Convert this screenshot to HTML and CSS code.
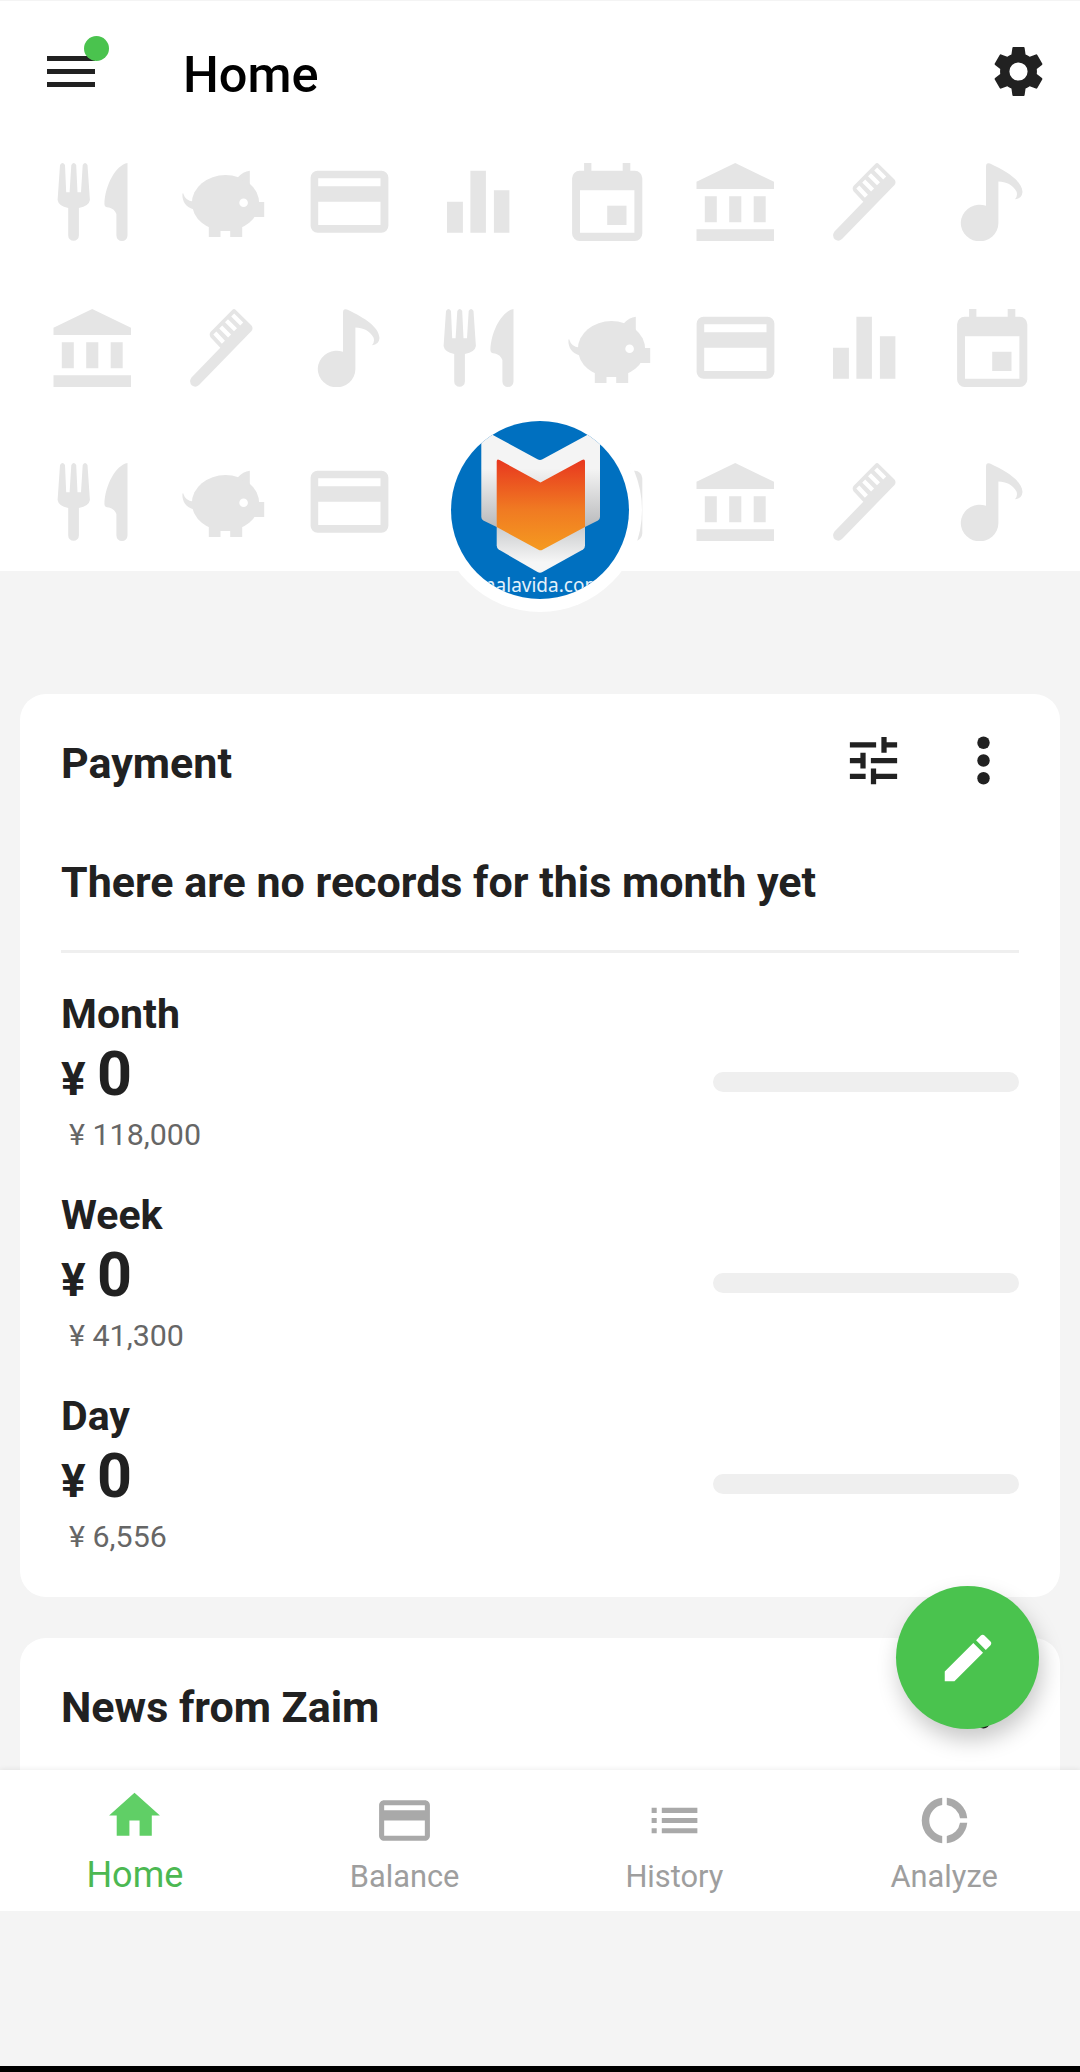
FILE: index.html
```html
<!DOCTYPE html>
<html lang="en">
<head>
    <meta charset="UTF-8">
    <meta name="viewport" content="width=device-width, initial-scale=1.0">
    <title>Home</title>
    <link rel="stylesheet" href="styles.css">
</head>
<body>
    <!-- Icons of the header pattern -->
    <svg class="sprite" xmlns="http://www.w3.org/2000/svg">
        <symbol id="food" viewBox="0 0 128.5 78">
            <path d="M29.6 37L32 2Q34.5-2 37 2L38.2 29.3H41.6L43.3 2Q45.8-2 48.2 2L49.5 29.3H53L54.7 2Q57-2 59.5 2L61.9 37Q61 43 50.9 45V72.5a5.35 5.35 0 0 1-10.7 0V45Q30.5 43 29.6 37Z"/>
            <path d="M99.5 0C88 2 77 22 76.4 41Q76.5 44.5 81 44.6Q86.5 46 88.4 51V72.5a5.55 5.5 0 0 0 11.1 0Z"/>
        </symbol>
        <symbol id="pig" viewBox="0 0 128.5 78">
            <ellipse cx="68.5" cy="40" rx="33.6" ry="28"/>
            <path d="M80.7 14.5Q86 8.5 92.8 7.7V23ZM96 39H107.2V54H96ZM51.8 60H85.2V74H73.2V68H63.5V74H51.8Z"/>
            <path d="M26 30Q28.5 38 36 38.5L37 46.5Q25 43 25.4 31Z"/>
            <circle cx="86.6" cy="39.7" r="4.3" fill="#fff"/>
        </symbol>
        <symbol id="card" viewBox="0 0 128.5 78">
            <path fill-rule="evenodd" d="M32.6 7.7H96.4a7 7 0 0 1 7 7V62.7a7 7 0 0 1-7 7H32.6a7 7 0 0 1-7-7V14.7a7 7 0 0 1 7-7ZM33.2 15.2V23.3H95.5V15.2ZM33.2 38.7V62H95.5V38.7Z"/>
        </symbol>
        <symbol id="bars" viewBox="0 0 128.5 78">
            <path d="M33 38.7H48.9V69.7H33ZM56.4 7.7H71.9V69.7H56.4ZM79.9 27.3H95.4V69.7H79.9Z"/>
        </symbol>
        <symbol id="calendar" viewBox="0 0 128.5 78">
            <path fill-rule="evenodd" d="M41.1 0H48.4V7.7H79.7V0H87.3V7.7H91.8a7.5 7.5 0 0 1 7.5 7.5V70.5a7.5 7.5 0 0 1-7.5 7.5H36.6a7.5 7.5 0 0 1-7.5-7.5V15.2a7.5 7.5 0 0 1 7.5-7.5H41.1ZM37 27.3V69.7H91.4V27.3Z"/>
            <path d="M64.2 42.7H83.5V62H64.2Z"/>
        </symbol>
        <symbol id="bank" viewBox="0 0 128.5 78">
            <path d="M64.2 0L103 18.7V26H25.5V18.7ZM33.8 33.3H45.8V59.3H33.8ZM58.2 33.3H70.3V59.3H58.2ZM82.7 33.3H94.7V59.3H82.7ZM25.5 66.3H103V78H25.5Z"/>
        </symbol>
        <symbol id="brush" viewBox="0 0 128.5 78">
            <path d="M34.5 68.5L63.3 38.8L53.5 28.3Q51.8 25.5 53.5 23L75 1.2Q77-1 79 1.2L94.5 16.5Q96.5 19 94.5 22L42 76Q38.5 79 35 76.5Q31.5 73 34.5 68.5Z"/>
            <path d="M57.8 24L66.4 33.3M63.7 18L72.6 27M69.5 11.7L78.5 20.7M75.7 6L84.7 15" stroke="#fff" stroke-width="4.2"/>
        </symbol>
        <symbol id="note" viewBox="0 0 128.5 78">
            <path d="M58 3.5Q58-1 62 .5C80 9 94 18 94.5 29Q94 35.5 87 36.3Q90 33 88.5 28.5C85 22 78 18.5 70.4 18.5V60A18.8 18.3 0 1 1 58 42.8Z"/>
        </symbol>
    </svg>

    <div class="app">
        <header class="hero">
            <div class="appbar">
                <div class="menu">
                    <span></span>
                    <span></span>
                    <span></span>
                    <i class="dot"></i>
                </div>
                <h1>Home</h1>
                <svg class="gear" viewBox="0 0 24 24"><path d="M19.43 12.98c.04-.32.07-.64.07-.98s-.03-.66-.07-.98l2.11-1.65c.19-.15.24-.42.12-.64l-2-3.46c-.12-.22-.39-.3-.61-.22l-2.49 1c-.52-.4-1.08-.73-1.69-.98l-.38-2.65C14.46 2.18 14.25 2 14 2h-4c-.25 0-.46.18-.49.42l-.38 2.65c-.61.25-1.17.59-1.69.98l-2.49-1c-.23-.09-.49 0-.61.22l-2 3.46c-.13.22-.07.49.12.64l2.11 1.65c-.04.32-.07.65-.07.98s.03.66.07.98l-2.11 1.65c-.19.15-.24.42-.12.64l2 3.46c.12.22.39.3.61.22l2.49-1c.52.4 1.08.73 1.69.98l.38 2.65c.03.24.24.42.49.42h4c.25 0 .46-.18.49-.42l.38-2.65c.61-.25 1.17-.59 1.69-.98l2.49 1c.23.09.49 0 .61-.22l2-3.46c.12-.22.07-.49-.12-.64l-2.11-1.65zM12 15.7a3.7 3.7 0 1 1 0-7.4a3.7 3.7 0 0 1 0 7.4z"/></svg>
            </div>

            <div class="pattern">
                <svg><use href="#food"/></svg>
                <svg><use href="#pig"/></svg>
                <svg><use href="#card"/></svg>
                <svg><use href="#bars"/></svg>
                <svg><use href="#calendar"/></svg>
                <svg><use href="#bank"/></svg>
                <svg><use href="#brush"/></svg>
                <svg><use href="#note"/></svg>

                <svg><use href="#bank"/></svg>
                <svg><use href="#brush"/></svg>
                <svg><use href="#note"/></svg>
                <svg><use href="#food"/></svg>
                <svg><use href="#pig"/></svg>
                <svg><use href="#card"/></svg>
                <svg><use href="#bars"/></svg>
                <svg><use href="#calendar"/></svg>

                <svg><use href="#food"/></svg>
                <svg><use href="#pig"/></svg>
                <svg><use href="#card"/></svg>
                <svg><use href="#bars"/></svg>
                <svg><use href="#calendar"/></svg>
                <svg><use href="#bank"/></svg>
                <svg><use href="#brush"/></svg>
                <svg><use href="#note"/></svg>
            </div>

            <div class="avatar">
                <svg viewBox="0 0 178 178">
                    <defs>
                        <linearGradient id="silver" x1="0" y1="0" x2="0" y2="1">
                            <stop offset=".45" stop-color="#f4f4f4"/>
                            <stop offset="1" stop-color="#b9babc"/>
                        </linearGradient>
                        <linearGradient id="silverLow" x1="0" y1="0" x2="0" y2="1">
                            <stop offset="0" stop-color="#c4c6c8"/>
                            <stop offset=".8" stop-color="#f6f6f6"/>
                        </linearGradient>
                        <linearGradient id="orange" x1="0" y1="0" x2="0" y2="1">
                            <stop offset="0" stop-color="#e8371f"/>
                            <stop offset=".55" stop-color="#f07a22"/>
                            <stop offset="1" stop-color="#f59a20"/>
                        </linearGradient>
                    </defs>
                    <rect width="178" height="178" fill="#0070c0"/>
                    <path d="M30.3 0V96Q30.3 98.3 32.3 99.5L45.7 106H134L147 99.5Q149 98.3 149 96V0L135.7 14.3L91.5 38.3Q89 39.6 86.5 38.3L42.3 14.3Z" fill="url(#silver)"/>
                    <path d="M45.7 100H134V124.5Q134 127 132 128.5L91.5 151Q89 152.3 86.5 151L47.7 128.5Q45.7 127 45.7 124.5Z" fill="url(#silverLow)"/>
                    <path d="M45.7 40.5Q45.7 37.5 48.5 39L89.5 61.5L131 39Q134 37.5 134 40.5V106L91.5 128.7Q89.5 129.8 87.5 128.7L45.7 106Z" fill="url(#orange)"/>
                    <text class="site" x="89" y="170.7">malavida.com</text>
                </svg>
            </div>
        </header>

        <main class="content">
            <section class="panel">
                <div class="panel-head">
                    <h2>Payment</h2>
                    <svg class="tune" viewBox="0 0 24 24"><path d="M3 17v2h6v-2H3zM3 5v2h10V5H3zm10 16v-2h8v-2h-8v-2h-2v6h2zM7 9v2H3v2h4v2h2V9H7zm14 4v-2H11v2h10zm-6-4h2V7h4V5h-4V3h-2v6z"/></svg>
                    <svg class="more" viewBox="0 0 24 24"><circle cx="12" cy="6" r="2.1"/><circle cx="12" cy="12" r="2.1"/><circle cx="12" cy="18" r="2.1"/></svg>
                </div>
                <p class="message">There are no records for this month yet</p>
                <div class="periods">
                    <div class="period">
                        <div>
                            <h3>Month</h3>
                            <p class="amount"><span>¥ </span>0</p>
                            <p class="budget">¥ 118,000</p>
                        </div>
                        <div class="bar"></div>
                    </div>
                    <div class="period">
                        <div>
                            <h3>Week</h3>
                            <p class="amount"><span>¥ </span>0</p>
                            <p class="budget">¥ 41,300</p>
                        </div>
                        <div class="bar"></div>
                    </div>
                    <div class="period">
                        <div>
                            <h3>Day</h3>
                            <p class="amount"><span>¥ </span>0</p>
                            <p class="budget">¥ 6,556</p>
                        </div>
                        <div class="bar"></div>
                    </div>
                </div>
            </section>

            <section class="panel">
                <div class="panel-head">
                    <h2>News from Zaim</h2>
                    <svg class="more" viewBox="0 0 24 24"><circle cx="12" cy="6" r="2.1"/><circle cx="12" cy="12" r="2.1"/><circle cx="12" cy="18" r="2.1"/></svg>
                </div>
            </section>
        </main>

        <nav class="tabs">
            <a class="tab active">
                <svg viewBox="0 0 24 24"><path d="M10 20v-6h4v6h4.8v-8H22L12 3 2 12h3v8z"/></svg>
                <span>Home</span>
            </a>
            <a class="tab">
                <svg viewBox="0 0 24 24"><path d="M20 4H4c-1.11 0-1.99.89-1.99 2L2 18c0 1.11.89 2 2 2h16c1.11 0 2-.89 2-2V6c0-1.11-.89-2-2-2zm0 14H4v-6h16v6zm0-10H4V6h16v2z"/></svg>
                <span>Balance</span>
            </a>
            <a class="tab">
                <svg viewBox="0 0 24 24"><path d="M3 13h2v-2H3v2zm0 4h2v-2H3v2zm0-8h2V7H3v2zm4 4h14v-2H7v2zm0 4h14v-2H7v2zM7 7v2h14V7H7z"/></svg>
                <span>History</span>
            </a>
            <a class="tab">
                <svg viewBox="0 0 24 24"><path d="M11.1 3.05V5.9A6.2 6.2 0 0 0 11.1 18.1V20.95A9 9 0 0 1 11.1 3.05ZM12.9 3.05A9 9 0 0 1 20.95 11.1H18.1A6.2 6.2 0 0 0 12.9 5.9ZM20.95 12.9A9 9 0 0 1 12.9 20.95V18.1A6.2 6.2 0 0 0 18.1 12.9Z"/></svg>
                <span>Analyze</span>
            </a>
        </nav>

        <div class="system"></div>

        <div class="fab">
            <svg viewBox="0 0 24 24"><path d="M3 17.25V21h3.75L17.81 9.94l-3.75-3.75L3 17.25zM20.71 7.04c.39-.39.39-1.02 0-1.41l-2.34-2.34c-.39-.39-1.02-.39-1.41 0l-1.83 1.83 3.75 3.75 1.83-1.83z"/></svg>
        </div>
    </div>
</body>
</html>
```

FILE: styles.css
```css
* {
    box-sizing: border-box;
}
body {
    margin: 0;
    font-family: Roboto, "Liberation Sans", sans-serif;
    color: #212121;
    background-color: #f4f4f4;
}
h1, h2, h3, p {
    margin: 0;
}
svg {
    display: block;
    flex-shrink: 0;
}
.sprite {
    position: absolute;
    width: 0;
    height: 0;
}
.app {
    position: relative;
    display: flex;
    flex-direction: column;
    width: 1080px;
    height: 2072px;
    padding-top: 1px;
    overflow: hidden;
}

/* Header */
.hero {
    position: relative;
    height: 570px;
    flex-shrink: 0;
    background-color: #fff;
}
.appbar {
    display: flex;
    align-items: center;
    height: 141px;
    padding: 0 32px 0 47px;
}
.menu {
    position: relative;
    display: flex;
    flex-direction: column;
    gap: 8px;
    width: 48px;
}
.menu span {
    height: 5px;
    background-color: #212121;
}
.dot {
    position: absolute;
    top: -20px;
    right: -14px;
    width: 25px;
    height: 25px;
    border-radius: 50%;
    background-color: #4ac34e;
}
.appbar h1 {
    flex: 1;
    margin-left: 88px;
    padding-top: 7px;
    font-size: 50.5px;
    font-weight: 500;
    line-height: 60px;
    color: #000;
}
.gear {
    width: 59px;
    height: 59px;
    fill: #212121;
}
.pattern {
    display: grid;
    grid-template-columns: repeat(8, 1fr);
    grid-template-rows: 146px 154px 78px;
    padding: 21px 23px 0 28px;
    fill: #e5e5e5;
}
.pattern svg {
    width: 128.5px;
    height: 78px;
}
.avatar {
    position: absolute;
    left: 438px;
    top: 407px;
    width: 204px;
    height: 204px;
    padding: 13px;
    border-radius: 50%;
    background-color: #fff;
}
.avatar svg {
    width: 178px;
    height: 178px;
    border-radius: 50%;
}
.site {
    font-family: "Noto Sans", sans-serif;
    font-size: 19px;
    text-anchor: middle;
    fill: #e3f1fb;
}

/* Cards */
.content {
    flex: 1;
    padding: 123px 20px 0;
    overflow: hidden;
}
.panel {
    margin-bottom: 41px;
    padding: 0 41px 36px;
    border-radius: 26px;
    background-color: #fff;
}
.panel-head {
    display: flex;
    align-items: center;
    height: 133px;
}
.panel-head h2 {
    flex: 1;
    padding-top: 5px;
    font-size: 43px;
    font-weight: 700;
    line-height: 50px;
}
.tune {
    width: 63px;
    height: 63px;
    margin-right: 43px;
    fill: #212121;
}
.more {
    width: 71px;
    height: 71px;
    fill: #212121;
}
.message {
    padding-bottom: 12px;
    border-bottom: 3px solid #efefef;
    font-size: 43px;
    font-weight: 700;
    line-height: 111px;
}
.periods {
    display: flex;
    flex-direction: column;
    gap: 31px;
    padding-top: 36px;
}
.period {
    display: flex;
    align-items: center;
    justify-content: space-between;
    height: 170px;
}
.period h3 {
    font-size: 41px;
    font-weight: 700;
    line-height: 50px;
}
.amount {
    font-size: 61px;
    font-weight: 700;
    line-height: 70px;
}
.amount span {
    font-size: 46px;
    line-height: 1;
}
.budget {
    padding: 1px 0 0 8px;
    font-size: 30.4px;
    line-height: 49px;
    color: #666;
}
.bar {
    width: 306px;
    height: 20px;
    margin-top: 16px;
    border-radius: 10px;
    background-color: #efefef;
}

/* Bottom navigation */
.tabs {
    position: relative;
    display: flex;
    height: 141px;
    flex-shrink: 0;
    padding-right: 1px;
    background-color: #fff;
    box-shadow: 0 -1px 5px rgba(0, 0, 0, 0.07);
}
.tab {
    display: flex;
    flex: 1;
    flex-direction: column;
    align-items: center;
    padding-top: 20px;
    font-size: 30.8px;
    line-height: 40px;
    color: #9e9e9e;
}
.tab svg {
    width: 61px;
    height: 61px;
    margin-bottom: 6px;
    fill: #a9a9a9;
}
.active {
    padding-top: 15px;
    font-size: 36px;
    color: #4cb852;
}
.active svg {
    margin-bottom: 9px;
    fill: #60cf66;
}
.system {
    position: relative;
    height: 161px;
    flex-shrink: 0;
    border-bottom: 6px solid #000;
    background-color: #f4f4f4;
}
.fab {
    position: absolute;
    left: 896px;
    top: 1586px;
    display: flex;
    align-items: center;
    justify-content: center;
    width: 143px;
    height: 143px;
    border-radius: 50%;
    background-color: #4ac34e;
    box-shadow: 3px 11px 22px rgba(0, 0, 0, 0.22);
}
.fab svg {
    width: 62px;
    height: 62px;
    fill: #fff;
}
```
